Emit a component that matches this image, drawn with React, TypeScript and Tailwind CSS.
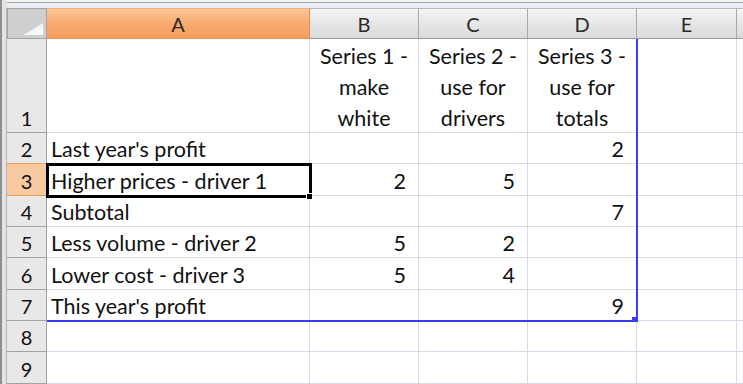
import React from "react";

const cols = ["A", "B", "C", "D", "E"];

type Row = { n: number; h: string; a?: string; b?: string; c?: string; d?: string; sel?: boolean };

const rows: Row[] = [
  { n: 2, h: "h-[31px]", a: "Last year's profit", d: "2" },
  { n: 3, h: "h-[32px]", a: "Higher prices - driver 1", b: "2", c: "5", sel: true },
  { n: 4, h: "h-[31px]", a: "Subtotal", d: "7" },
  { n: 5, h: "h-[31px]", a: "Less volume - driver 2", b: "5", c: "2" },
  { n: 6, h: "h-[32px]", a: "Lower cost - driver 3", b: "5", c: "4" },
  { n: 7, h: "h-[31px]", a: "This year's profit", d: "9" },
  { n: 8, h: "h-[31px]" },
  { n: 9, h: "h-[32px]" },
];

const widths = ["w-[263px]", "w-[109px]", "w-[109px]", "w-[109px]", "w-[100px]"];

function LeftFrame({ h }: { h: string }) {
  return <div className={`${h} w-[7px] shrink-0 bg-[#e3e3e3] border-l-2 border-l-[#8e8e8e] border-r border-r-[#b4b4b4]`} />;
}

function Num({ v }: { v?: string }) {
  return <span className="pr-[12px]">{v}</span>;
}

export default function App() {
  return (
    <div
      className="relative w-[743px] h-[384px] overflow-hidden bg-white text-[#111111]"
      style={{ fontFamily: "Lato, 'Open Sans', sans-serif" }}
    >
      {/* top frame */}
      <div className="flex h-[8px]">
        <div className="w-[7px] h-[8px] bg-[#e3e3e3] border-l-2 border-l-[#8e8e8e]" />
        <div className="flex-1 flex flex-col">
          <div className="h-[2px] bg-[#f3f3f3]" />
          <div className="h-[1px] bg-[#a8a8a8]" />
          <div className="h-[5px] bg-[#e9edf1]" />
        </div>
      </div>

      {/* column headers */}
      <div className="flex h-[31px]">
        <LeftFrame h="h-[31px]" />
        <div className="w-[40px] h-[31px] shrink-0 relative bg-[#cfcfcf] border border-[#a3a3a3]">
          <svg className="absolute right-[3px] bottom-[3px]" width="20" height="12" viewBox="0 0 20 12">
            <defs>
              <linearGradient id="tri" x1="0" y1="0" x2="1" y2="1">
                <stop offset="0" stopColor="#e6e6e6" />
                <stop offset="1" stopColor="#ffffff" />
              </linearGradient>
            </defs>
            <polygon points="20,0 20,12 0,12" fill="url(#tri)" />
          </svg>
        </div>
        {cols.map((c, i) => (
          <div
            key={c}
            className={`${widths[i]} h-[31px] shrink-0 flex items-center justify-center text-[20px] leading-[24px] border-r border-b ${
              i === 0
                ? "bg-linear-to-b from-[#fcc596] via-[#f9aa70] to-[#f79d5e] border-r-[#e88d4c] border-b-[#ef9350] border-t border-t-[#f3b381]"
                : "bg-linear-to-b from-[#f5f5f5] via-[#e6e6e6] to-[#dadada] border-r-[#a9a9a9] border-b-[#9c9c9c] border-t border-t-[#b8b8b8]"
            }`}
          >
            <span className="text-[#2a2a2a]">{c}</span>
          </div>
        ))}
        <div className="flex-1 h-[31px] bg-linear-to-b from-[#f5f5f5] to-[#dadada] border-b border-b-[#9c9c9c] border-t border-t-[#b8b8b8]" />
      </div>

      {/* row 1 */}
      <div className="flex h-[94px]">
        <LeftFrame h="h-[94px]" />
        <div className="w-[40px] h-[94px] shrink-0 bg-[#e8e8e8] border-r border-r-[#a3a3a3] border-b border-b-[#a3a3a3] flex items-end justify-center text-[20px] leading-[24px] pb-[2px]">
          1
        </div>
        {[
          null,
          ["Series 1 -", "make", "white"],
          ["Series 2 -", "use for", "drivers"],
          ["Series 3 -", "use for", "totals"],
          null,
        ].map((lines, i) => (
          <div
            key={i}
            className={`${widths[i]} h-[94px] shrink-0 border-r border-b border-[#d4dae6] flex flex-col items-center justify-end text-[21.5px] leading-[31px]`}
          >
            <div className="flex flex-col items-center translate-y-[2px]">
              {lines?.map((l) => (
                <span key={l}>{l}</span>
              ))}
            </div>
          </div>
        ))}
        <div className="flex-1 h-[94px] border-b border-[#d4dae6]" />
      </div>

      {/* rows 2-9 */}
      {rows.map((r) => (
        <div key={r.n} className={`flex ${r.h}`}>
          <LeftFrame h={r.h} />
          <div
            className={`w-[40px] shrink-0 border-r flex items-end justify-center text-[20px] leading-[24px] pb-[2px] ${
              r.sel
                ? "bg-[#f8caa0] border-b border-b-[#ef9a55] border-t border-t-[#ef9a55] border-r-[#e08a48] -mt-[1px]"
                : "bg-[#e8e8e8] border-b border-b-[#a3a3a3] border-r-[#a3a3a3]"
            }`}
          >
            {r.n}
          </div>
          <div className="w-[263px] shrink-0 border-r border-b border-[#d4dae6] flex items-end text-[21.5px] leading-[24px] pb-[2px] pl-[4px] whitespace-nowrap">
            {r.a}
          </div>
          <div className="w-[109px] shrink-0 border-r border-b border-[#d4dae6] flex items-end justify-end text-[21.5px] leading-[24px] pb-[2px]">
            <Num v={r.b} />
          </div>
          <div className="w-[109px] shrink-0 border-r border-b border-[#d4dae6] flex items-end justify-end text-[21.5px] leading-[24px] pb-[2px]">
            <Num v={r.c} />
          </div>
          <div className="w-[109px] shrink-0 border-r border-b border-[#d4dae6] flex items-end justify-end text-[21.5px] leading-[24px] pb-[2px]">
            <Num v={r.d} />
          </div>
          <div className="w-[100px] shrink-0 border-r border-b border-[#d4dae6]" />
          <div className="flex-1 border-b border-[#d4dae6]" />
        </div>
      ))}

      {/* blue data range outline */}
      <div className="absolute left-[636px] top-[39px] w-[2px] h-[283px] bg-[#3b3bf2]" />
      <div className="absolute left-[47px] top-[320px] w-[591px] h-[2px] bg-[#3b3bf2]" />
      <div className="absolute left-[632px] top-[317px] w-[5px] h-[5px] bg-[#3b3bf2]" />

      {/* active cell A3 */}
      <div className="absolute left-[46px] top-[163px] w-[266px] h-[35px] border-[3px] border-black" />
      <div className="absolute left-[306px] top-[193px] w-[7px] h-[7px] bg-black border border-white" />
    </div>
  );
}
